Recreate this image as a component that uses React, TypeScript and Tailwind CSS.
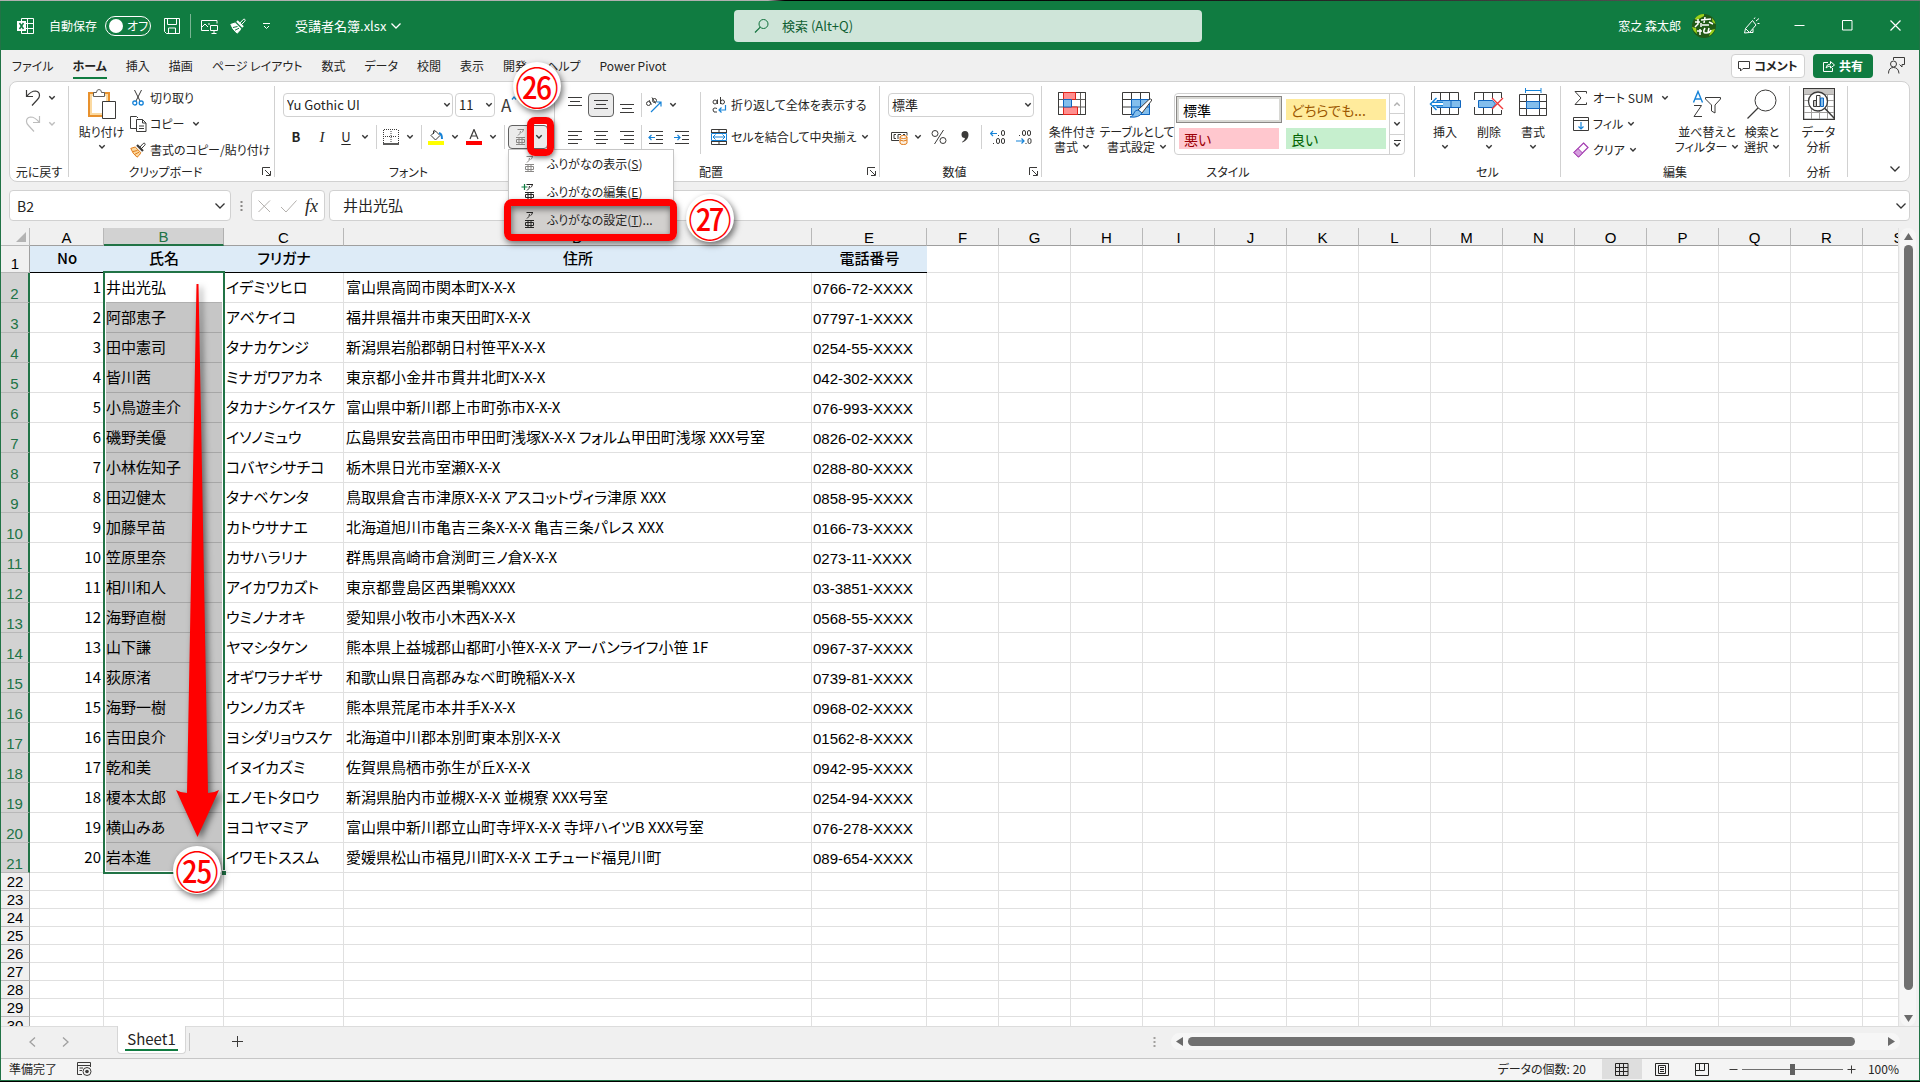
import type { ReactNode } from "react";

// ---------------------------------------------------------------------------
// Data
// ---------------------------------------------------------------------------

interface Person {
  name: string;
  kana: string;
  address: string;
  phone: string;
}

const PEOPLE: Person[] = [
  { name: "井出光弘", kana: "イデミツヒロ", address: "富山県高岡市関本町X-X-X", phone: "0766-72-XXXX" },
  { name: "阿部恵子", kana: "アベケイコ", address: "福井県福井市東天田町X-X-X", phone: "07797-1-XXXX" },
  { name: "田中憲司", kana: "タナカケンジ", address: "新潟県岩船郡朝日村笹平X-X-X", phone: "0254-55-XXXX" },
  { name: "皆川茜", kana: "ミナガワアカネ", address: "東京都小金井市貫井北町X-X-X", phone: "042-302-XXXX" },
  { name: "小鳥遊圭介", kana: "タカナシケイスケ", address: "富山県中新川郡上市町弥市X-X-X", phone: "076-993-XXXX" },
  { name: "磯野美優", kana: "イソノミュウ", address: "広島県安芸高田市甲田町浅塚X-X-X フォルム甲田町浅塚 XXX号室", phone: "0826-02-XXXX" },
  { name: "小林佐知子", kana: "コバヤシサチコ", address: "栃木県日光市室瀬X-X-X", phone: "0288-80-XXXX" },
  { name: "田辺健太", kana: "タナベケンタ", address: "鳥取県倉吉市津原X-X-X アスコットヴィラ津原 XXX", phone: "0858-95-XXXX" },
  { name: "加藤早苗", kana: "カトウサナエ", address: "北海道旭川市亀吉三条X-X-X 亀吉三条パレス XXX", phone: "0166-73-XXXX" },
  { name: "笠原里奈", kana: "カサハラリナ", address: "群馬県高崎市倉渕町三ノ倉X-X-X", phone: "0273-11-XXXX" },
  { name: "相川和人", kana: "アイカワカズト", address: "東京都豊島区西巣鴨XXXX", phone: "03-3851-XXXX" },
  { name: "海野直樹", kana: "ウミノナオキ", address: "愛知県小牧市小木西X-X-X", phone: "0568-55-XXXX" },
  { name: "山下謙", kana: "ヤマシタケン", address: "熊本県上益城郡山都町小笹X-X-X アーバンライフ小笹 1F", phone: "0967-37-XXXX" },
  { name: "荻原渚", kana: "オギワラナギサ", address: "和歌山県日高郡みなべ町晩稲X-X-X", phone: "0739-81-XXXX" },
  { name: "海野一樹", kana: "ウンノカズキ", address: "熊本県荒尾市本井手X-X-X", phone: "0968-02-XXXX" },
  { name: "吉田良介", kana: "ヨシダリョウスケ", address: "北海道中川郡本別町東本別X-X-X", phone: "01562-8-XXXX" },
  { name: "乾和美", kana: "イヌイカズミ", address: "佐賀県鳥栖市弥生が丘X-X-X", phone: "0942-95-XXXX" },
  { name: "榎本太郎", kana: "エノモトタロウ", address: "新潟県胎内市並槻X-X-X 並槻寮 XXX号室", phone: "0254-94-XXXX" },
  { name: "横山みあ", kana: "ヨコヤマミア", address: "富山県中新川郡立山町寺坪X-X-X 寺坪ハイツB XXX号室", phone: "076-278-XXXX" },
  { name: "岩本進", kana: "イワモトススム", address: "愛媛県松山市福見川町X-X-X エチュード福見川町", phone: "089-654-XXXX" },
];

const COLUMNS = "ABCDEFGHIJKLMNOPQRS".split("");
const FILLER = COLUMNS.slice(5);
const EMPTY_ROWS = [22, 23, 24, 25, 26, 27, 28, 29, 30];

const TABS = ["ファイル", "ホーム", "挿入", "描画", "ページ レイアウト", "数式", "データ", "校閲", "表示", "開発", "ヘルプ", "Power Pivot"];

// ---------------------------------------------------------------------------
// Icons
// ---------------------------------------------------------------------------

function Icon({ w = 16, h = 16, children }: { w?: number; h?: number; children: ReactNode }) {
  return (
    <svg width={w} height={h} viewBox={`0 0 ${w} ${h}`} fill="none" stroke="#3b3a39" className="block shrink-0" aria-hidden="true">
      {children}
    </svg>
  );
}

function Chevron({ color = "#333", big = false }: { color?: string; big?: boolean }) {
  return big ? (
    <svg width="12" height="8" viewBox="0 0 12 8" fill="none" stroke={color} strokeWidth="1.3" className="block shrink-0">
      <path d="M1.5 1.5 6 6l4.5-4.5" />
    </svg>
  ) : (
    <svg width="8" height="6" viewBox="0 0 8 6" fill="none" stroke={color} strokeWidth="1.4" className="block shrink-0">
      <path d="M1.3 1.3 4 4l2.7-2.7" />
    </svg>
  );
}

function Brush({ color = "#3b3a39", fill = "none", tip = color, crease = tip }: { color?: string; fill?: string; tip?: string; crease?: string }) {
  return (
    <Icon>
      <path d="M9.500 5.500 13.200 1.500q1-.8 1.700 0 .6.800-.1 1.700L11 7" stroke={color} />
      <path d="M7 3 13 9" stroke={color} strokeWidth="2.200" />
      <path d="M5.200 5 .8 6.400q1.600 5 6.200 8.800 2.800-1.800 3.800-4.600z" stroke={tip} fill={fill} />
      <path d="M3 9.500 7.500 8.500M5 12.200l4-2" stroke={crease} />
    </Icon>
  );
}

function TextLines({ rows }: { rows: [number, number, number][] }) {
  return (
    <Icon>
      {rows.map(([x1, x2, y]) => (
        <path key={y} d={`M${x1} ${y}.5H${x2}`} />
      ))}
    </Icon>
  );
}

function IndentIcon({ flip }: { flip: boolean }) {
  return (
    <Icon>
      <path d="M1 2.5h14M8 6.5h7M8 10.5h7M1 14.5h14" />
      <path d={flip ? "M0 8.5h5.5M3.5 6 6 8.500 3.500 11" : "M1 8.5h6M3.5 6 1 8.5 3.5 11"} stroke="#1683d8" strokeWidth="1.2" />
    </Icon>
  );
}

// The furigana glyph: a small katakana above its kanji
function RubyIcon({ muted = false, plus = false }: { muted?: boolean; plus?: boolean }) {
  const color = muted ? "#8a8886" : "#252423";
  return (
    <Icon w={16} h={18}>
      <path d="M5.500 1.500h6.500M11.500 1.500Q11 4 9.500 4.500M8.500 3Q8.500 6 6 7.500" stroke={color} />
      <path d="M4 9.500h9M4 16.500h9M7 9.500v7M10 9.500v7M4.500 11.500h8v3h-8z" stroke={color} />
      {plus && <path d="M3.500 1v6M.5 4h6" stroke="#107c41" strokeWidth="1.200" />}
    </Icon>
  );
}

function Launcher() {
  return (
    <button type="button" aria-label="オプション" className="mb-px flex h-4 w-3 shrink-0 items-center justify-start">
      <Icon w={9} h={9}>
        <path d="M.5 8V.5H8M3 3l5 5M8.500 4v4.500H4" />
      </Icon>
    </button>
  );
}

// ---------------------------------------------------------------------------
// Ribbon parts
// ---------------------------------------------------------------------------

function Group({ label, width, launcher = false, children }: { label: string; width: string; launcher?: boolean; children: ReactNode }) {
  return (
    <section aria-label={label} className={`flex shrink-0 ${width}`}>
      <div className="flex min-w-0 flex-1 flex-col">
        <div className="flex flex-1 items-start">{children}</div>
        <div className="flex h-[18px] items-center">
          <span className="flex-1 text-center whitespace-nowrap">{label}</span>
          {launcher && <Launcher />}
        </div>
      </div>
      <div className="my-1 w-px bg-[#d1d1d1]" />
    </section>
  );
}

function Tool({ label, active = false, children }: { label: string; active?: boolean; children: ReactNode }) {
  return (
    <button
      type="button"
      aria-label={label}
      className={`flex h-6 w-[26px] items-center justify-center ${active ? "rounded border border-[#616161] bg-[#ebebeb]" : ""}`}
    >
      {children}
    </button>
  );
}

function SplitTool({ label, children }: { label: string; children: ReactNode }) {
  return (
    <div className="flex h-6">
      <button type="button" aria-label={label} className="flex w-[22px] items-center justify-center">
        {children}
      </button>
      <button type="button" aria-label={`${label} メニュー`} className="flex w-4 items-center justify-center">
        <Chevron />
      </button>
    </div>
  );
}

function SmallButton({ icon, label, chevron = false, spread = false }: { icon: ReactNode; label: string; chevron?: boolean; spread?: boolean }) {
  return (
    <button type="button" className="flex h-[26px] items-center gap-1 whitespace-nowrap">
      <span className="flex w-4 justify-center">{icon}</span>
      {label}
      {chevron && (
        <span className={spread ? "ml-1" : ""}>
          <Chevron />
        </span>
      )}
    </button>
  );
}

function LargeButton({ icon, lines, width, chevron = true }: { icon: ReactNode; lines: string[]; width: string; chevron?: boolean }) {
  return (
    <button type="button" className={`flex shrink-0 flex-col items-center pt-1 leading-[15px] whitespace-nowrap ${width}`}>
      <span className="mb-0.5 flex h-9 items-center">{icon}</span>
      <span>{lines[0]}</span>
      <span className="flex h-[15px] items-center gap-1">
        {lines[1]}
        {chevron && <Chevron />}
      </span>
    </button>
  );
}

function Combo({ label, value, width }: { label: string; value: string; width: string }) {
  return (
    <div className={`relative h-6 ${width}`}>
      <select aria-label={label} className="h-6 w-full appearance-none rounded border border-[#d1d1d1] bg-white px-[3px] text-[13px] leading-[22px] text-[#252423]">
        <option>{value}</option>
      </select>
      <span className="pointer-events-none absolute inset-y-0 right-0.5 flex items-center">
        <Chevron />
      </span>
    </div>
  );
}

function Rule({ tight = false }: { tight?: boolean }) {
  return <div className={`h-6 w-px bg-[#d1d1d1] ${tight ? "mx-px" : "mx-[3px]"}`} />;
}

// ---------------------------------------------------------------------------
// Step markers
// ---------------------------------------------------------------------------

function Step({ mark, place }: { mark: string; place: string }) {
  return (
    <div className={`pointer-events-none absolute z-30 flex h-12 w-12 items-center justify-center rounded-full bg-white text-[44px] leading-[48px] text-[#ff0000] shadow-[2px_3px_6px_rgba(0,0,0,0.55)] ${place}`}>
      {mark}
    </div>
  );
}

function PhoneticMenu() {
  const items = [
    { label: "ふりがなの表示", key: "S", tail: "", icon: <RubyIcon muted /> },
    { label: "ふりがなの編集", key: "E", tail: "", icon: <RubyIcon plus /> },
    { label: "ふりがなの設定", key: "T", tail: "...", icon: <RubyIcon /> },
  ];
  return (
    <ul role="menu" className="absolute top-[23px] -left-px z-20 w-[166px] border border-[#c6c6c6] bg-white shadow-md">
      {items.map((item) => (
        <li key={item.key} role="none">
          <button type="button" role="menuitem" className={`flex h-7 w-full items-center gap-[10px] pl-3 whitespace-nowrap ${item.tail ? "bg-[#d2d0ce]" : ""}`}>
            {item.icon}
            <span>
              {item.label}(<u>{item.key}</u>){item.tail}
            </span>
          </button>
        </li>
      ))}
    </ul>
  );
}

// ---------------------------------------------------------------------------
// Title bar and tabs
// ---------------------------------------------------------------------------

function TitleBar() {
  return (
    <header className="grid h-[49px] shrink-0 grid-cols-[733fr_468fr_717fr] items-center bg-[#107c41] text-white">
      <div className="flex items-center">
        <span className="mr-[15px] ml-4">
          <Icon w={17} h={16}>
            <path d="M4.500 3V.5h12v15h-12V13M10.500.5v15M4.500 5.500h12M4.500 10.500h12" stroke="#fff" />
            <path d="M0 3h9v10H0z" fill="#fff" stroke="none" />
            <path d="m2.500 5 4 6M6.500 5l-4 6" stroke="#107c41" strokeWidth="1.500" />
          </Icon>
        </span>
        <label htmlFor="autosave">自動保存</label>
        <span className="relative ml-2 flex h-5 w-[46px] items-center rounded-full border border-white pl-[3px]">
          <input id="autosave" type="checkbox" role="switch" className="h-[14px] w-[14px] appearance-none rounded-full bg-white" />
          <span className="ml-1">オフ</span>
        </span>
        <button type="button" aria-label="上書き保存" className="ml-[13px]">
          <Icon>
            <path d="M.5.5h15v15h-13l-2-2zM3.500.5v6h9v-6M4.500 15.500v-5.500h7v5.500" stroke="#fff" />
          </Icon>
        </button>
        <div className="mx-[10px] h-6 w-px bg-[#7ab594]" />
        <button type="button" aria-label="画面">
          <Icon w={17}>
            <path d="M8 12.500H.5v-10h15.500v3M1 9l3-3 3 3M7 6h2" stroke="#fff" />
            <path d="M9.500 7.500h7v5h-7zM13 12.500v3M10.500 15.500h5" stroke="#fff" />
          </Icon>
        </button>
        <button type="button" aria-label="書式のコピー" className="ml-3">
          <Brush color="#fff" fill="#fff" crease="#107c41" />
        </button>
        <button type="button" aria-label="クイック アクセス ツール バーのカスタマイズ" className="mr-6 ml-4">
          <Icon w={9} h={8}>
            <path d="M1 1.500h7M2 4l2.500 2.500L7 4" stroke="#fff" />
          </Icon>
        </button>
        <button type="button" className="flex items-center gap-1 text-[13px]">
          受講者名簿.xlsx
          <Chevron color="#fff" big />
        </button>
      </div>

      <label className="flex h-8 items-center gap-3 rounded bg-[#cfe5d9] pl-5 text-[#0f5f33]">
        <Icon>
          <circle cx="9.500" cy="6" r="4.500" stroke="#0f703b" />
          <path d="M6.300 9.200 1 14.500" stroke="#0f703b" strokeWidth="1.200" />
        </Icon>
        <input aria-label="検索" placeholder="検索 (Alt+Q)" className="min-w-0 flex-1 bg-transparent text-[13px] placeholder:text-[#0f5f33] placeholder:opacity-100" />
      </label>

      <div className="flex items-center justify-end">
        <span>窓之 森太郎</span>
        <svg width="24" height="24" viewBox="0 0 24 24" className="ml-[11px] block" aria-hidden="true">
          <circle cx="12" cy="12" r="12" fill="#225a18" />
          <path d="M2.500 5A12 12 0 0 1 12 0v2L5 6zM20 4a12 12 0 0 1 3.500 6l-3-2zM0 13l4 1 1 6a12 12 0 0 1-5-7zM23 15l-4 1-2 6a12 12 0 0 0 6-7z" fill="#9bd01c" />
          <path d="M3 8h5M6 5v5l-3 3M9 6l10-1M13 3l-1 6M17 8l4 2M10 11h7M9 9v4M5 17h5M8 15v6M13 14q-3 5 1 5t5-3M17 14l-1 4" fill="none" stroke="#fff" strokeWidth="1.500" />
        </svg>
        <button type="button" aria-label="ペン" className="mr-[15px] ml-[27px]">
          <Icon w={17} h={17}>
            <path d="M9.500 3.500 13 8l-6.500 7.500-5 .5 1-4.500zM10 12v3.500H7M2.500 11.500l4 4M11 2l1-1.500M13 4l3-2.500M14.500 6.500h2" stroke="#fff" />
          </Icon>
        </button>
        <button type="button" aria-label="最小化" className="flex h-8 w-12 items-center justify-center">
          <Icon w={11} h={11}>
            <path d="M.5 5.500h10" stroke="#fff" />
          </Icon>
        </button>
        <button type="button" aria-label="最大化" className="flex h-8 w-12 items-center justify-center">
          <Icon w={11} h={11}>
            <path d="M.5.5h9.500v9.500H.5z" stroke="#fff" />
          </Icon>
        </button>
        <button type="button" aria-label="閉じる" className="flex h-8 w-12 items-center justify-center">
          <Icon w={11} h={11}>
            <path d="m.5.5 10 10M10.500.5l-10 10" stroke="#fff" strokeWidth="1.200" />
          </Icon>
        </button>
      </div>
    </header>
  );
}

function TabRow() {
  return (
    <div className="flex h-[31px] shrink-0 items-center pr-[14px] pl-[11px]">
      <nav className="flex gap-[19px]">
        {TABS.map((tab) => (
          <a
            key={tab}
            href="#ribbon"
            className={`border-b-2 pt-0.5 leading-[22px] whitespace-nowrap ${tab === "ホーム" ? "border-[#107c41] font-bold" : "border-transparent"}`}
          >
            {tab}
          </a>
        ))}
      </nav>
      <button type="button" className="ml-auto flex h-6 w-[74px] items-center justify-center gap-1 rounded border border-[#d1d1d1] bg-white font-bold">
        <Icon w={12} h={12}>
          <path d="M.5 1.500h11v7H5L2.500 11V8.500h-2z" />
        </Icon>
        コメント
      </button>
      <button type="button" className="ml-2 flex h-6 w-[60px] items-center justify-center gap-1 rounded bg-[#107c41] font-bold text-white">
        <Icon w={12} h={12}>
          <path d="M5 2.500H.5v9h9V8M3 8q.5-4 4.500-4V1.500L11.500 5 7.500 8V6Q5 6 3 8z" stroke="#fff" />
        </Icon>
        共有
      </button>
      <button type="button" aria-label="共同編集者" className="ml-[15px]">
        <Icon w={17} h={17}>
          <path d="M5.500 3V.500h11v7h-2.500v2.500l-2.500-2.500" />
          <circle cx="5.500" cy="7" r="3" />
          <path d="M.5 16.500q0-6 5-6t5.500 6" />
        </Icon>
      </button>
    </div>
  );
}

// ---------------------------------------------------------------------------
// Ribbon
// ---------------------------------------------------------------------------

function Ribbon() {
  return (
    <div id="ribbon" className="mr-[9px] ml-2 flex h-[101px] shrink-0 rounded-lg border border-[#d1d1d1] bg-white">
      <Group label="元に戻す" width="w-[59px]">
        <div className="pt-[3px] pl-[15px]">
          <button type="button" aria-label="元に戻す" className="flex h-[26px] items-center gap-1.5">
            <Icon w={17}>
              <path d="M1.500 0v6.500H8M1.500 6.500Q6 1 10.500 1q4 .5 4 4.500 0 2-2 4L7 15.500" strokeWidth="1.200" />
            </Icon>
            <Chevron />
          </button>
          <button type="button" aria-label="やり直し" disabled className="flex h-[26px] items-center gap-1.5">
            <Icon w={17}>
              <path d="M14.500 0v6.500H8M14.500 6.500Q10 1 5.500 1q-4 .5-4 4.500 0 2 2 4L9 15.500" stroke="#bdbdbd" strokeWidth="1.200" />
            </Icon>
            <Chevron color="#bdbdbd" />
          </button>
        </div>
      </Group>

      <Group label="クリップボード" width="w-[206px]" launcher>
        <div className="w-1" />
        <LargeButton
          width="w-[57px]"
          lines={["貼り付け", ""]}
          icon={
            <Icon w={28} h={30}>
              <path d="M1 4h20v23H1z" fill="#fff" stroke="#e8912d" strokeWidth="2" />
              <path d="M3 6h16v19H3z" stroke="#fbd9a0" strokeWidth="2" />
              <path d="M5.500 7.500v-4h3Q8.500.5 11 .5t2.500 3h3v4z" fill="#fff" stroke="#605e5c" />
              <path d="M14.500 12.500h13v17h-13z" fill="#fff" />
            </Icon>
          }
        />
        <div className="pt-[3px]">
          <SmallButton
            label="切り取り"
            icon={
              <Icon w={12}>
                <path d="M2.500 0 8 11M9.500 0 4 11" />
                <circle cx="2.800" cy="13" r="2" stroke="#1683d8" strokeWidth="1.300" />
                <circle cx="9.200" cy="13" r="2" stroke="#1683d8" strokeWidth="1.300" />
              </Icon>
            }
          />
          <SmallButton
            label="コピー"
            chevron
            spread
            icon={
              <Icon w={17}>
                <path d="M6 12.500H.5V.5h6L8 2" />
                <path d="M6.500 3.500h6l3.500 3.500v8.500H6.500zM12.500 3.500V7h3.500M9 10h5M9 12.500h5" />
              </Icon>
            }
          />
          <SmallButton label="書式のコピー/貼り付け" icon={<Brush fill="#fbd9a0" tip="#e07b1a" />} />
        </div>
      </Group>

      <Group label="フォント" width="w-[280px]" launcher>
        <div className="pt-[7px] pl-2">
          <div className="flex h-8 items-center">
            <Combo label="フォント名" value="Yu Gothic UI" width="w-[170px]" />
            <div className="ml-0.5">
              <Combo label="フォント サイズ" value="11" width="w-[40px]" />
            </div>
            <button type="button" aria-label="フォント サイズの拡大" className="ml-1.5 flex text-[17px] leading-5 text-[#3b3a39]">
              A
              <Icon w={6} h={6}>
                <path d="M1 4.500 3 2l2 2.500" stroke="#1683d8" strokeWidth="1.300" />
              </Icon>
            </button>
          </div>
          <div className="flex h-8 items-center">
            <Tool label="太字">
              <b className="text-[13px]">B</b>
            </Tool>
            <Tool label="斜体">
              <i className="font-['Liberation_Serif',serif] text-[15px]">I</i>
            </Tool>
            <SplitTool label="下線">
              <u className="text-[13px] underline-offset-2">U</u>
            </SplitTool>
            <Rule />
            <SplitTool label="罫線">
              <Icon>
                <path d="M.5 1v13M15.500 1v13M1 .5h14M8 2v12M2 7.500h12" strokeDasharray="1 1" />
                <path d="M0 15h16" stroke="#252423" strokeWidth="1.500" />
              </Icon>
            </SplitTool>
            <Rule />
            <SplitTool label="塗りつぶしの色">
              <Icon>
                <path d="M7.500 2 3 6.500l4.500 4.500L12 6.500zM7.500 2Q6 .5 5.500 2v3" />
                <path d="M11 4q3 .5 3 6" stroke="#1683d8" strokeWidth="2" />
                <path d="M0 12h16v4H0z" fill="#ff0" stroke="none" />
              </Icon>
            </SplitTool>
            <SplitTool label="フォントの色">
              <Icon>
                <path d="M4 10 8 .5 12 10M5.300 7h5.400" strokeWidth="1.200" />
                <path d="M0 12h16v4H0z" fill="#f00" stroke="none" />
              </Icon>
            </SplitTool>
            <Rule />
            <div className="relative flex h-6 w-10 rounded border border-[#616161] bg-[#ebebeb]">
              <button type="button" aria-label="ふりがなの表示/非表示" className="flex flex-1 items-center justify-center">
                <RubyIcon muted />
              </button>
              <button type="button" aria-label="ふりがなメニュー" aria-expanded="true" className="flex w-4 items-center justify-center">
                <Chevron />
              </button>
              <PhoneticMenu />
              <div className="pointer-events-none absolute -top-[9px] left-[18px] z-30 h-[39px] w-[27px] rounded-lg border-[7px] border-[#ff0000] shadow-[1px_2px_5px_rgba(0,0,0,0.5)]" />
              <div className="pointer-events-none absolute top-[73px] -left-[5px] z-30 h-[42px] w-[173px] rounded-lg border-[7px] border-[#ff0000] shadow-[1px_3px_6px_rgba(0,0,0,0.5),inset_1px_3px_6px_rgba(0,0,0,0.5)]" />
              <Step mark="㉖" place="-top-16 left-1" />
              <Step mark="㉗" place="top-[68px] left-[177px]" />
            </div>
          </div>
        </div>
      </Group>

      <Group label="配置" width="w-[325px]" launcher>
        <div className="w-[145px] pt-[7px] pl-[7px]">
          <div className="flex h-8 items-center">
            <Tool label="上揃え">
              <TextLines rows={[[1, 15, 0], [3, 13, 4], [1, 15, 8]]} />
            </Tool>
            <Tool label="上下中央揃え" active>
              <TextLines rows={[[1, 15, 3], [3, 13, 7], [1, 15, 11]]} />
            </Tool>
            <Tool label="下揃え">
              <TextLines rows={[[1, 15, 7], [3, 13, 11], [1, 15, 15]]} />
            </Tool>
            <Rule tight />
            <SplitTool label="方向">
              <Icon>
                <circle cx="2.500" cy="6.500" r="2" />
                <path d="m3 3 2.500 4.500M6 .5l3.500 6" />
                <circle cx="8.500" cy="3.500" r="2" />
                <path d="M5 15 14.500 5.500M10.500 5h4.500v4.500" stroke="#1683d8" strokeWidth="1.200" />
              </Icon>
            </SplitTool>
          </div>
          <div className="flex h-8 items-center">
            <Tool label="左揃え">
              <TextLines rows={[[1, 15, 2], [1, 11, 6], [1, 15, 10], [1, 11, 14]]} />
            </Tool>
            <Tool label="中央揃え">
              <TextLines rows={[[1, 15, 2], [3, 13, 6], [1, 15, 10], [3, 13, 14]]} />
            </Tool>
            <Tool label="右揃え">
              <TextLines rows={[[1, 15, 2], [5, 15, 6], [1, 15, 10], [5, 15, 14]]} />
            </Tool>
            <Rule tight />
            <Tool label="インデントを減らす">
              <IndentIcon flip={false} />
            </Tool>
            <Tool label="インデントを増やす">
              <IndentIcon flip />
            </Tool>
          </div>
        </div>
        <div className="mt-[10px] h-[62px] w-px bg-[#d1d1d1]" />
        <div className="w-[168px] pt-[7px] pl-[10px]">
          <button type="button" className="flex h-8 items-center gap-1 whitespace-nowrap">
            <Icon>
              <circle cx="4" cy="5" r="2" />
              <path d="M6.500 2.500V7M9.500 0v7M6 11.500q-4-1.500-4 1.500t4 2" />
              <circle cx="11.500" cy="5" r="2" />
              <path d="M14.500 8v5H8M10.500 10.500 8 13l2.500 2.500" stroke="#1683d8" strokeWidth="1.200" />
            </Icon>
            折り返して全体を表示する
          </button>
          <div className="flex h-8 items-center justify-between whitespace-nowrap">
            <button type="button" className="flex items-center gap-1">
              <Icon>
                <path d="M.5 4V.500h15V4M.5 12v3.500h15V12M8 .5V3M8 13v2.500M.5 3.500h15M.5 12.500h15" />
                <path d="M.5 4.500h15v7H.5z" fill="#fff" stroke="#1683d8" />
                <path d="M2 8h12M4.500 5.500 2 8l2.500 2.500M11.500 5.500 14 8l-2.500 2.500" stroke="#1683d8" />
              </Icon>
              セルを結合して中央揃え
            </button>
            <button type="button" aria-label="結合メニュー">
              <Chevron />
            </button>
          </div>
        </div>
      </Group>

      <Group label="数値" width="w-[162px]" launcher>
        <div className="pt-[7px] pl-2">
          <div className="flex h-8 items-center">
            <Combo label="表示形式" value="標準" width="w-[146px]" />
          </div>
          <div className="flex h-8 items-center">
            <SplitTool label="通貨表示形式">
              <Icon w={17}>
                <path d="M8 11.500H.5v-8h15.500v3M5 5.500H3v4h2M7 10V5.500h3M12 5.500h2" />
                <path d="M9 8v6q0 1.500 3.500 1.500T16 14V8" fill="#fdf0e0" stroke="#e07b1a" />
                <ellipse cx="12.500" cy="8" rx="3.500" ry="1.500" fill="#fff" stroke="#e07b1a" />
                <path d="M9 11q3.500 2 7 0" stroke="#e07b1a" />
              </Icon>
            </SplitTool>
            <Tool label="パーセント スタイル">
              <Icon>
                <circle cx="4" cy="4.500" r="3" />
                <circle cx="12" cy="11.500" r="3" />
                <path d="M12.500 1 3.500 15" />
              </Icon>
            </Tool>
            <Tool label="桁区切りスタイル">
              <Icon w={8} h={12}>
                <path d="M4 0q3.500 0 3.500 4 0 5-6 7.500L1 11q3-2 3-4Q.5 7 .5 3.500.5 0 4 0z" fill="#3b3a39" stroke="none" />
              </Icon>
            </Tool>
            <Rule />
            <Tool label="小数点以下の表示桁数を増やす">
              <Icon>
                <rect x="11.500" y="1.500" width="3" height="5" rx="1.500" />
                <rect x="6.500" y="9.500" width="3" height="5" rx="1.500" />
                <rect x="11.500" y="9.500" width="3" height="5" rx="1.500" />
                <path d="M8 6.500h1M3 14.500h1" />
                <path d="M7 4.500H.5M3 2 .5 4.500 3 7" stroke="#1683d8" strokeWidth="1.200" />
              </Icon>
            </Tool>
            <Tool label="小数点以下の表示桁数を減らす">
              <Icon>
                <rect x="6.500" y="1.500" width="3" height="5" rx="1.500" />
                <rect x="11.500" y="1.500" width="3" height="5" rx="1.500" />
                <rect x="12" y="9.500" width="3" height="5" rx="1.500" />
                <path d="M3 6.500h1M9.500 14.500h1" />
                <path d="M0 12h7.500M5.500 9.500 8 12l-2.500 2.500" stroke="#1683d8" strokeWidth="1.200" />
              </Icon>
            </Tool>
          </div>
        </div>
      </Group>

      <Group label="スタイル" width="w-[373px]">
        <div className="w-0.5" />
        <LargeButton
          width="w-14"
          lines={["条件付き", "書式"]}
          icon={
            <Icon w={28} h={24}>
              <path d="M.5.5h27v22H.5zM.5 7.500h27M.5 15h27M22.500.5v22" stroke="#605e5c" />
              <path d="M.5.5h27v22H.5z" />
              <path d="M5.500.5h12v7h-12zM5.500 15h14v7.500h-14z" fill="#ff8f8f" stroke="#e3241b" />
              <path d="M5.500 7.500h8V15h-8z" fill="#83beec" stroke="#1066bf" />
            </Icon>
          }
        />
        <LargeButton
          width="w-[74px]"
          lines={["テーブルとして", "書式設定"]}
          icon={
            <Icon w={30} h={27}>
              <path d="M.5 1.500h27v22H.5zM.5 8.500h27M.5 16h27M9.500 1.500v22M18.500 1.500v22" />
              <path d="M9.500 8.500h18v15h-18z" fill="#83beec" stroke="#1066bf" />
              <path d="M18.500 8.500v15M9.500 16h18" stroke="#1066bf" />
              <path d="M28.500 8 30 9 20 22l-4-3L27 8.500z" fill="#fff" />
              <path d="M16 19l4 3q-3 5-12 4 4-1 4-4 1-3 4-3z" fill="#83beec" stroke="#1066bf" />
            </Icon>
          }
        />
        <div className="mt-[11px] flex h-[62px] rounded border border-[#d1d1d1] text-[14px]">
          <div className="grid w-[214px] grid-cols-[106px_100px] grid-rows-2 gap-x-1 gap-y-0.5 py-0.5 pl-px">
            <button type="button" className="border border-[#8a8886] bg-[#d8d8d4] p-0.5">
              <span className="flex h-full items-center bg-white pl-1 text-black">標準</span>
            </button>
            <button type="button" className="my-[3px] bg-[#ffeb9c] pl-[5px] text-left leading-5 whitespace-nowrap text-[#9c5700]">どちらでも...</button>
            <button type="button" className="mx-[3px] my-[3px] bg-[#ffc7ce] pl-[5px] text-left leading-5 text-[#9c0006]">悪い</button>
            <button type="button" className="my-[3px] bg-[#c6efce] pl-[5px] text-left leading-5 text-[#006100]">良い</button>
          </div>
          <div className="flex w-[15px] flex-col divide-y divide-[#d1d1d1] border-l border-[#d1d1d1]">
            <button type="button" aria-label="上へ" className="flex flex-1 items-center justify-center">
              <span className="rotate-180">
                <Chevron color="#b0b0b0" />
              </span>
            </button>
            <button type="button" aria-label="下へ" className="flex flex-1 items-center justify-center">
              <Chevron />
            </button>
            <button type="button" aria-label="その他" className="flex flex-1 flex-col items-center justify-center gap-px">
              <span className="h-px w-[7px] bg-[#333]" />
              <Chevron />
            </button>
          </div>
        </div>
      </Group>

      <Group label="セル" width="w-[146px]">
        <div className="w-2" />
        <LargeButton
          width="w-11"
          lines={["挿入", ""]}
          icon={
            <Icon w={32} h={24}>
              <path d="M2.500 8V.5h27V8M2.500 15v7.500h27V15M11.500.5v22M20.500.5v22" />
              <path d="M8 8.500h23.500v7H8z" fill="#83beec" stroke="#1066bf" />
              <path d="M22 8.500v7" stroke="#1066bf" />
              <path d="M14 10.500H4M14 13.500H4M7.500 6 1.500 12l6 6" stroke="#1683d8" strokeWidth="1.500" />
              <path d="M3.500 12H14" stroke="#fff" strokeWidth="2" />
            </Icon>
          }
        />
        <LargeButton
          width="w-11"
          lines={["削除", ""]}
          icon={
            <Icon w={30} h={24}>
              <path d="M.5 8V.5h27V6M.5 15v7.500h27V18M9.500.5v8M18.500.5v6M9.500 15v7.500M18.500 17v5.500" />
              <path d="M4.500 8.500h14l3 3.500-3 3.500h-14z" fill="#83beec" stroke="#1066bf" />
              <path d="m18 6 11 11M29 6 18 17" stroke="#f0383b" strokeWidth="1.400" />
            </Icon>
          }
        />
        <LargeButton
          width="w-11"
          lines={["書式", ""]}
          icon={
            <Icon w={28} h={34}>
              <path d="M6.500 1v5M22 1v5M6.500 3.500H22" stroke="#1683d8" />
              <path d="M.5 7.500h27v21H.5zM.5 14.500h27M.5 21.500h27M7.500 7.500v21M20.500 7.500v21" />
              <path d="M7.500 14.500h13v7h-13z" fill="#83beec" stroke="#1066bf" />
            </Icon>
          }
        />
      </Group>

      <Group label="編集" width="w-[229px]">
        <div className="w-[112px] pt-[3px] pl-3">
          <SmallButton
            label="オート SUM"
            chevron
            spread
            icon={
              <Icon w={14}>
                <path d="M12.500 3.500V1.500H1L7 8l-6 6.500h11.500v-2" />
              </Icon>
            }
          />
          <SmallButton
            label="フィル"
            chevron
            icon={
              <Icon>
                <path d="M.5 1.500h15v13H.5zM.5 4.500h15" />
                <path d="M8 6v7M5.500 10.500 8 13l2.500-2.500" stroke="#1683d8" strokeWidth="1.200" />
              </Icon>
            }
          />
          <SmallButton
            label="クリア"
            chevron
            icon={
              <Icon>
                <path d="M10.500 1 15 5.500 5.500 15 1 10.500z" fill="#fff" stroke="#a33bb0" strokeWidth="1.200" />
                <path d="M5 6.500 9.500 11l-4 4L1 10.500z" fill="#d59ede" stroke="#a33bb0" />
              </Icon>
            }
          />
        </div>
        <div className="w-0.5" />
        <LargeButton
          width="w-[64px]"
          lines={["並べ替えと", "フィルター"]}
          icon={
            <Icon w={30} h={28}>
              <path d="M1.500 12.500 6 1.500l4.500 11M3 9h6" stroke="#1683d8" strokeWidth="1.400" />
              <path d="M2 15.500h7.500L2 26.500h8" />
              <path d="M13.500 7.500h15v1.500L23 15v8l-3.500-2v-6l-6-6z" />
            </Icon>
          }
        />
        <LargeButton
          width="w-[46px]"
          lines={["検索と", "選択"]}
          icon={
            <Icon w={30} h={30}>
              <circle cx="18.500" cy="11.500" r="10.500" />
              <path d="M11 19 .5 29.500" strokeWidth="1.200" />
            </Icon>
          }
        />
      </Group>

      <Group label="分析" width="w-[58px]">
        <LargeButton
          width="w-[57px]"
          chevron={false}
          lines={["データ", "分析"]}
          icon={
            <Icon w={32} h={32}>
              <path d="M.5.5h31v31H.5z" fill="#fff" strokeWidth="1.500" />
              <path d="M1 1h30v5H1z" fill="#c8c6c4" stroke="none" />
              <path d="M1 6.500h30M1 12.500h30M1 18.500h30M1 24.500h30M8.500 6v25M16.500 6v25M24.500 6v25" stroke="#a19f9d" />
              <circle cx="15" cy="13.500" r="9.500" fill="#fff" strokeWidth="1.300" />
              <path d="M10.500 12.500h3v6h-3z" fill="#c8c6c4" />
              <path d="M13.500 7.500h3.500v11h-3.500z" fill="#fff" />
              <path d="M17.500 10h3v8.500h-3z" fill="#83beec" stroke="#1066bf" />
              <path d="m22 20.500 9.500 10" strokeWidth="1.500" />
            </Icon>
          }
        />
      </Group>

      <div className="flex flex-1 items-end justify-end pr-2 pb-2">
        <button type="button" aria-label="リボンを折りたたむ">
          <Chevron big />
        </button>
      </div>
    </div>
  );
}

function FormulaBar() {
  return (
    <div className="mt-2 mr-[9px] mb-[7px] ml-2 flex h-[31px] shrink-0 text-[15px]">
      <div className="flex w-[222px] items-center rounded border border-[#d1d1d1] bg-white pr-1 pl-[7px]">
        <input aria-label="名前ボックス" defaultValue="B2" className="min-w-0 flex-1 text-[14px]" />
        <Chevron big />
      </div>
      <div className="flex w-5 items-center justify-center">
        <Icon w={3} h={12}>
          <path d="M1.500 1v2M1.500 5v2M1.500 9v2" stroke="#8a8886" strokeWidth="2" />
        </Icon>
      </div>
      <div className="flex w-[74px] items-center justify-between rounded border border-[#d1d1d1] bg-white px-1">
        <button type="button" aria-label="キャンセル">
          <Icon>
            <path d="m2.500 2.500 11.500 11.500M14 2.500 2.500 14" stroke="#b3b0ad" />
          </Icon>
        </button>
        <button type="button" aria-label="入力">
          <Icon w={17}>
            <path d="m1 9 5 5L16.500 2.500" stroke="#b3b0ad" />
          </Icon>
        </button>
        <button type="button" aria-label="関数の挿入" className="pr-0.5 font-['Liberation_Serif',serif] text-[18px] leading-5 text-[#252423] italic">
          fx
        </button>
      </div>
      <div className="ml-1 flex flex-1 items-center rounded border border-[#d1d1d1] bg-white pr-0.5 pl-[13px]">
        <input aria-label="数式バー" defaultValue="井出光弘" className="min-w-0 flex-1 pb-0.5" />
        <Chevron big />
      </div>
    </div>
  );
}

// ---------------------------------------------------------------------------
// Sheet
// ---------------------------------------------------------------------------

const CELL = "border-r border-b border-[#e0e0e0] p-0 pb-0.5 whitespace-nowrap";
const BLANK_CELL = "border-r border-b border-[#e0e0e0] p-0";
const ROW_HEAD = "border-r border-b p-0 align-bottom font-['Liberation_Sans',sans-serif] font-normal leading-4";
const ROW_HEAD_PLAIN = "border-[#9f9f9f] border-b-[#b8b8b8] bg-[#f0f0f0] text-black";
const ROW_HEAD_PICKED = "border-[#217346] border-b-[#b8b8b8] border-r-2 bg-[#d2d2d2] text-[#217346]";
const TITLE_CELL = "border-b border-black bg-[#ddebf7] p-0 pb-0.5 text-center font-medium";

function Fillers() {
  return (
    <>
      {FILLER.map((col) => (
        <td key={col} className={BLANK_CELL} />
      ))}
    </>
  );
}

function Sheet() {
  return (
    <div className="relative min-w-0 flex-1 overflow-hidden border-r border-[#e0e0e0] bg-white">
      <table className="w-[1905px] table-fixed border-separate border-spacing-0 text-[15px] leading-5 text-black">
        <colgroup>
          <col className="w-[29px]" />
          <col className="w-[74px]" />
          <col className="w-[120px]" />
          <col className="w-[120px]" />
          <col className="w-[468px]" />
          <col className="w-[115px]" />
          {FILLER.map((col) => (
            <col key={col} className="w-[72px]" />
          ))}
        </colgroup>
        <thead>
          <tr className="h-[18px] font-['Liberation_Sans',sans-serif] leading-[15px]">
            <th aria-label="すべて選択" className="border-r border-b border-[#b8b8b8] bg-[#f0f0f0] p-0">
              <svg width="10" height="10" viewBox="0 0 10 10" className="mr-[3px] ml-auto block">
                <path d="M10 0v10H0z" fill="#b3b3b3" />
              </svg>
            </th>
            {COLUMNS.map((col) => (
              <th
                key={col}
                scope="col"
                className={`border-r p-0 font-normal ${
                  col === "B"
                    ? "border-b-2 border-r-[#b0b0b0] border-b-[#217346] bg-[#d2d2d2] pt-px text-[#217346]"
                    : "border-b border-r-[#b8b8b8] border-b-[#9f9f9f] bg-[#f0f0f0] pt-0.5"
                }`}
              >
                {col}
              </th>
            ))}
          </tr>
        </thead>
        <tbody>
          <tr className="h-[27px]">
            <th scope="row" className={`${ROW_HEAD} ${ROW_HEAD_PLAIN}`}>1</th>
            <td className={TITLE_CELL}>No</td>
            <td className={TITLE_CELL}>氏名</td>
            <td className={TITLE_CELL}>フリガナ</td>
            <td className={TITLE_CELL}>住所</td>
            <td className={TITLE_CELL}>電話番号</td>
            <Fillers />
          </tr>
          {PEOPLE.map((person, i) => (
            <tr key={person.name} className="h-[30px]">
              <th scope="row" className={`${ROW_HEAD} ${ROW_HEAD_PICKED}`}>{i + 2}</th>
              <td className={`${CELL} pr-0.5 text-right`}>{i + 1}</td>
              <td className={`border-r border-b p-0 pb-0.5 pl-0.5 whitespace-nowrap ${i === 0 ? "border-[#b0b0b0] bg-white" : "border-[#a6a6a6] bg-[#c6c6c6]"}`}>{person.name}</td>
              <td className={`${CELL} pl-0.5`}>{person.kana}</td>
              <td className={`${CELL} pl-0.5`}>{person.address}</td>
              <td className={`${CELL} pt-1 pl-px font-['Liberation_Sans',sans-serif]`}>{person.phone}</td>
              <Fillers />
            </tr>
          ))}
          {EMPTY_ROWS.map((n) => (
            <tr key={n} className="h-[18px]">
              <th scope="row" className={`${ROW_HEAD} ${ROW_HEAD_PLAIN}`}>{n}</th>
              {COLUMNS.slice(0, 5).map((col) => (
                <td key={col} className={BLANK_CELL} />
              ))}
              <Fillers />
            </tr>
          ))}
        </tbody>
      </table>

      {/* Selection frame over B2:B21 with its fill handle */}
      <div className="pointer-events-none absolute top-[43px] left-[102px] h-[603px] w-[122px] border-2 border-[#217346]">
        <div className="h-full border border-white" />
        <div className="absolute -right-[3px] -bottom-[3px] h-[5px] w-[5px] border-t border-l border-white bg-[#217346]" />
      </div>

      {/* Drag direction */}
      <svg width="60" height="570" viewBox="0 0 60 570" className="pointer-events-none absolute top-[50px] left-[167px] drop-shadow-[3px_3px_3px_rgba(0,0,0,0.5)]">
        <path d="M28.500 6h2L40 515q6 0 11-3L29.500 559 8 512q5 3 11 3z" fill="#f00" />
      </svg>
      <Step mark="㉕" place="top-[618px] left-[172px]" />
    </div>
  );
}

function VerticalScroll() {
  return (
    <div className="mr-[3px] ml-px flex w-4 shrink-0 flex-col items-center rounded-full bg-[#f6f6f6] pt-[5px] pb-1">
      <Icon w={9} h={8}>
        <path d="M4.500 0 9 7H0z" fill="#6b6b6b" stroke="none" />
      </Icon>
      <div className="mt-1 w-[9px] flex-1 rounded-full bg-[#707070]" />
      <div className="mt-6">
        <Icon w={9} h={8}>
          <path d="M4.500 8 0 1h9z" fill="#6b6b6b" stroke="none" />
        </Icon>
      </div>
    </div>
  );
}

function SheetTabs() {
  return (
    <div className="flex h-[33px] shrink-0 items-start border-t border-b border-[#c6c6c6] border-t-[#dcdcdc]">
      <div className="flex h-[29px] w-[116px] items-center gap-[26px] pl-7">
        <button type="button" aria-label="前のシート">
          <Icon w={7} h={10}>
            <path d="M6 .5 1 5l5 4.500" stroke="#a0a0a0" strokeWidth="1.300" />
          </Icon>
        </button>
        <button type="button" aria-label="次のシート">
          <Icon w={7} h={10}>
            <path d="M1 .5 6 5 1 9.500" stroke="#a0a0a0" strokeWidth="1.300" />
          </Icon>
        </button>
      </div>
      <a href="#sheet1" className="-mt-px flex h-7 w-[69px] justify-center rounded-b border border-t-0 border-[#d6d6d6] bg-white">
        <span className="h-[25px] border-b-2 border-[#107c41] px-0.5 text-[15px] leading-[26px]">Sheet1</span>
      </a>
      <div className="mt-[6px] ml-[3px] h-[18px] w-px bg-[#c6c6c6]" />
      <button type="button" aria-label="新しいシート" className="mt-[9px] ml-[42px]">
        <Icon w={11} h={11}>
          <path d="M5.500 0v11M0 5.500h11" />
        </Icon>
      </button>
      <div className="mt-[9px] ml-auto">
        <Icon w={3} h={12}>
          <path d="M1.500 1v2M1.500 5v2M1.500 9v2" stroke="#a19f9d" strokeWidth="2" />
        </Icon>
      </div>
      <div className="mt-[6px] mr-[19px] ml-[15px] flex h-[17px] w-[38%] items-center rounded-full bg-[#f6f6f6] px-[5px]">
        <Icon w={8} h={9}>
          <path d="M0 4.500 7 0v9z" fill="#6b6b6b" stroke="none" />
        </Icon>
        <div className="mr-8 ml-1 h-[9px] flex-1 rounded-full bg-[#707070]" />
        <Icon w={8} h={9}>
          <path d="M8 4.500 1 0v9z" fill="#6b6b6b" stroke="none" />
        </Icon>
      </div>
    </div>
  );
}

function StatusBar() {
  return (
    <footer className="flex h-[21px] shrink-0 items-center bg-[#f4f4f4] pr-5 pb-px pl-2 whitespace-nowrap">
      <span>準備完了</span>
      <button type="button" aria-label="マクロの記録" className="ml-5">
        <Icon w={15} h={14}>
          <path d="M5 12.500H.5V.5h13V5M.5 3.500h13M2.500 6H6M2.500 8.500H5" />
          <circle cx="10" cy="9.500" r="4" />
          <circle cx="10" cy="9.500" r="1.800" fill="#3b3a39" stroke="none" />
        </Icon>
      </button>
      <span className="mr-4 ml-auto">データの個数: 20</span>
      <button type="button" aria-label="標準" className="flex h-5 w-10 items-center justify-center bg-[#dedede]">
        <Icon w={14} h={13}>
          <path d="M.5.5h12.500v12H.5zM.5 4.500h12.500M.5 8.500h12.500M4.500.5v12M8.500.5v12" stroke="#252423" />
        </Icon>
      </button>
      <button type="button" aria-label="ページ レイアウト" className="flex w-10 items-center justify-center">
        <Icon w={14} h={13}>
          <path d="M.5.5h13v12H.5zM3.500 2.500h7v8h-7zM5 4.500h4M5 6.500h4M5 8.500h4" stroke="#252423" />
        </Icon>
      </button>
      <button type="button" aria-label="改ページ プレビュー" className="flex w-10 items-center justify-center">
        <Icon w={14} h={13}>
          <path d="M.5.5h13v12H.5zM4.500.5v7h5v-7M.5 7.500h4" stroke="#252423" />
        </Icon>
      </button>
      <button type="button" aria-label="縮小" className="ml-[7px]">
        <Icon w={9} h={9}>
          <path d="M.5 4.500h8" />
        </Icon>
      </button>
      <input
        type="range"
        aria-label="ズーム"
        min="10"
        max="190"
        defaultValue="100"
        className="mx-1 h-[11px] w-[101px] appearance-none bg-transparent [&::-webkit-slider-runnable-track]:h-px [&::-webkit-slider-runnable-track]:bg-[#707070] [&::-webkit-slider-thumb]:-mt-[5px] [&::-webkit-slider-thumb]:h-[11px] [&::-webkit-slider-thumb]:w-[5px] [&::-webkit-slider-thumb]:appearance-none [&::-webkit-slider-thumb]:bg-[#616161]"
      />
      <button type="button" aria-label="拡大">
        <Icon w={9} h={9}>
          <path d="M.5 4.500h8M4.500.5v8" />
        </Icon>
      </button>
      <span className="ml-3">100%</span>
    </footer>
  );
}

export default function App() {
  return (
    <div className="flex h-screen flex-col overflow-hidden bg-black font-['Noto_Sans_CJK_JP',sans-serif] text-[12px] leading-4 text-[#252423] [font-feature-settings:'palt']">
      <div className="h-px shrink-0 bg-linear-to-r from-[#b0b0b0] from-40% via-black via-41% to-[#777]" />
      <div className="mb-px flex min-h-0 flex-1 flex-col border-x border-b border-[#217346] bg-[#f0f0f0]">
        <TitleBar />
        <TabRow />
        <Ribbon />
        <FormulaBar />
        <main className="flex min-h-0 flex-1">
          <Sheet />
          <VerticalScroll />
        </main>
        <SheetTabs />
        <StatusBar />
      </div>
    </div>
  );
}
